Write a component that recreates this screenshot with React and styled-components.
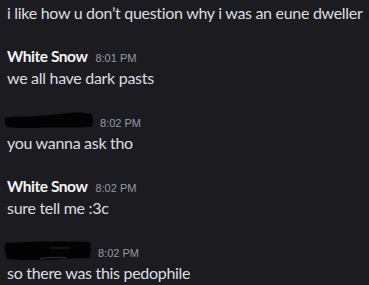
import React from 'react';
import styled, { createGlobalStyle } from 'styled-components';

const GlobalStyle = createGlobalStyle`
  html, body {
    margin: 0;
    background: #1c1c20;
  }
`;

const Chat = styled.div`
  background: #1c1c20;
  width: 369px;
  height: 285px;
  overflow: hidden;
  padding: 2px 0 0 7px;
  box-sizing: border-box;
  font-family: Lato, "Noto Sans", sans-serif;
`;

const Group = styled.div`
  margin-top: ${p => (p.$first ? 0 : 21)}px;
`;

const Header = styled.div`
  display: flex;
  align-items: center;
  height: 22px;
  gap: 8px;
`;

const Name = styled.span`
  color: #f2f3f5;
  font-weight: 700;
  font-size: 15.5px;
  letter-spacing: -0.45px;
`;

const Time = styled.span`
  color: #949ba4;
  font-family: "Liberation Sans", Arial, sans-serif;
  font-size: 11px;
  padding-top: 3px;
`;

const Content = styled.div`
  color: #dbdee1;
  font-size: 16px;
  line-height: 22px;
  letter-spacing: -0.3px;
  white-space: nowrap;
`;

const Scribble = styled.svg`
  display: block;
  align-self: flex-start;
  margin-left: -3px;
  margin-right: -2px;
  margin-top: ${p => p.$dy}px;
`;

const RedactedA = () => (
  <Scribble width="90" height="17" viewBox="0 0 90 17" $dy={2}>
    <path
      d="M1 6 C8 4 20 5 34 4 C46 3 56 2 66 1 C74 0 82 1 88 2 L89 9 C89 13 88 15 86 15 C70 16 50 15 30 16 C18 16 8 16 3 15 C1 13 0 9 1 6 Z"
      fill="#030303"
    />
  </Scribble>
);

const RedactedB = () => (
  <Scribble width="88" height="20" viewBox="0 0 88 20" $dy={1}>
    <path
      d="M1 2 C20 1 50 0 86 1 C87 5 87 10 86 17 C70 17 55 18 40 19 C25 19 12 19 3 18 C1 13 0 7 1 2 Z"
      fill="#030303"
    />
    <path d="M46 7 L66 7" stroke="#2a2a2e" strokeWidth="1" />
    <path d="M36 18 C44 16 54 16 62 17" stroke="#3a3a3e" strokeWidth="1" fill="none" />
  </Scribble>
);

export default function App() {
  return (
    <>
      <GlobalStyle />
      <Chat>
        <Group $first>
          <Content>i like how u don’t question why i was an eune dweller</Content>
        </Group>
        <Group>
          <Header>
            <Name>White Snow</Name>
            <Time>8:01 PM</Time>
          </Header>
          <Content>we all have dark pasts</Content>
        </Group>
        <Group>
          <Header>
            <RedactedA />
            <Time>8:02 PM</Time>
          </Header>
          <Content>you wanna ask tho</Content>
        </Group>
        <Group>
          <Header>
            <Name>White Snow</Name>
            <Time>8:02 PM</Time>
          </Header>
          <Content>sure tell me :3c</Content>
        </Group>
        <Group>
          <Header>
            <RedactedB />
            <Time>8:02 PM</Time>
          </Header>
          <Content>so there was this pedophile</Content>
        </Group>
      </Chat>
    </>
  );
}
